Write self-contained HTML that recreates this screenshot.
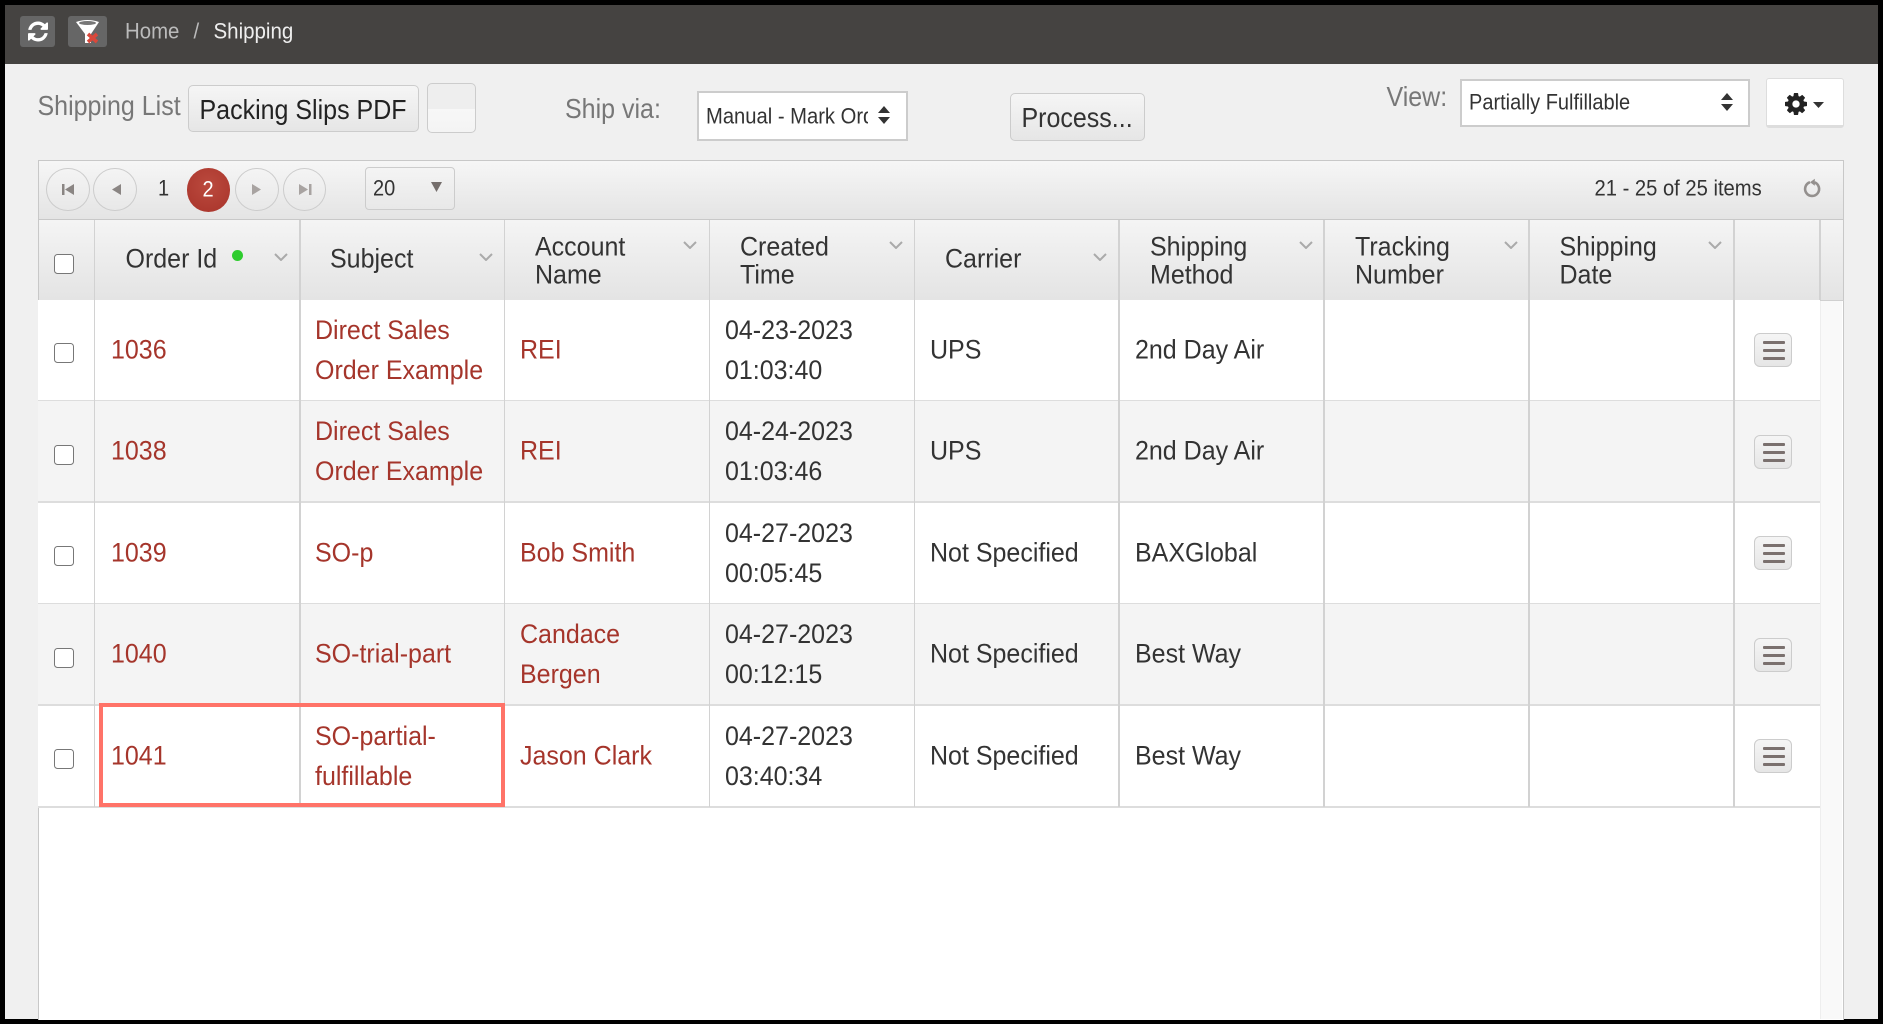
<!DOCTYPE html>
<html><head><meta charset="utf-8"><title>Shipping</title>
<style>
*{box-sizing:border-box}
html,body{margin:0;padding:0;background:#000;width:1883px;height:1024px;overflow:hidden}
body{position:relative;font-family:"Liberation Sans",Arial,sans-serif;color:#333}
.a{position:absolute}
.t{position:absolute;white-space:nowrap;line-height:40px;height:40px;font-size:25px;transform:scaleY(1.1);transform-origin:center}
#wrap{position:absolute;left:0;top:0;width:1883px;height:1024px;filter:blur(.35px)}
#page{position:absolute;left:4.5px;top:5px;width:1873.5px;height:1014px;background:#f0f0f0}
.bar{position:absolute;left:4.5px;top:5px;width:1873.5px;height:59px;background:#454341}
.tb{position:absolute;background:#666;border-radius:3px}
.btn{position:absolute;border:1.5px solid #ccc;border-radius:5px;background:linear-gradient(#f5f5f5,#e6e6e6)}
.sel{position:absolute;background:#fff;border:2px solid #ccc}
.circ{position:absolute;top:168px;width:43.5px;height:43px;border:1.5px solid #ccc;border-radius:50%;background:linear-gradient(#f4f4f4,#e8e8e8)}
.circ svg{position:absolute;left:0;top:0}
.vl{position:absolute;width:1.5px;background:#d2d2d2}
.row{position:absolute;left:38px;width:1782px;border-bottom:2px solid #ddd}
.c{position:absolute;top:0;bottom:0;display:flex;align-items:center;font-size:25px;line-height:37px;white-space:nowrap;transform:scaleY(1.08);color:#333}
.c.m{top:2px}
.r{color:#a5352b}
.cb{position:absolute;left:16px;width:20px;height:20px;background:#fff;border:1.5px solid #777;border-radius:3.5px}
.hm{position:absolute;left:1715.5px;width:38.5px;height:34px;border:1.5px solid #ccc;border-radius:6px;background:linear-gradient(#f5f5f5,#e6e6e6)}
.hm i{position:absolute;left:8px;width:22px;height:3px;background:#7a706e;border-radius:1px}
.h{position:absolute;font-size:25px;line-height:25.6px;white-space:nowrap;transform:scaleY(1.08);color:#333}
.chev{position:absolute;width:14px;height:8px}
</style></head><body>
<div id="wrap">
<div id="page"></div>
<div class="bar"></div>

<div class="tb" style="left:20px;top:16px;width:35px;height:31px"></div>
<svg class="a" style="left:27.5px;top:21px" width="20" height="21" viewBox="0 0 1536 1536"><path fill="#fff" d="M1511 928q0 5-1 7-64 268-268 434.5t-478 166.5q-146 0-282.5-55t-243.5-157l-129 129q-19 19-45 19t-45-19-19-45v-448q0-26 19-45t45-19h448q26 0 45 19t19 45-19 45l-137 137q71 66 161 102t187 36q134 0 250-65t186-179q11-17 53-117 8-23 30-23h192q13 0 22.5 9.5t9.5 22.5zm25-800v448q0 26-19 45t-45 19h-448q-26 0-45-19t-19-45 19-45l138-138q-148-137-349-137-134 0-250 65t-186 179q-11 17-53 117-8 23-30 23h-199q-13 0-22.5-9.5t-9.5-22.5v-7q65-268 270-434.5t480-166.5q146 0 284 55.5t245 156.5l130-129q19-19 45-19t45 19 19 45z"/></svg>
<div class="tb" style="left:68px;top:16px;width:39px;height:31px"></div>
<svg class="a" style="left:68px;top:16px" width="39" height="31" viewBox="0 0 39 31">
<path d="M8 6 Q19.5 2 31 6 L23 18 V27 H17 V18 Z" fill="#fff"/>
<ellipse cx="19.5" cy="7" rx="8.5" ry="2" fill="#777"/>
<path d="M20 18 L29 26 M29 18 L20 26" stroke="#d9483b" stroke-width="3.6"/>
</svg>
<div class="t" style="left:125px;top:12px;font-size:20.4px;color:#bbb">Home</div>
<div class="t" style="left:193.5px;top:12px;font-size:20.4px;color:#bbb">/</div>
<div class="t" style="left:213.5px;top:12px;font-size:20.5px;color:#eee">Shipping</div>

<div class="t" style="left:37.5px;top:86px;color:#777">Shipping List</div>
<div class="btn" style="left:187.5px;top:85px;width:231px;height:47px"></div>
<div class="t" style="left:199.5px;top:90px;color:#222">Packing Slips PDF</div>
<div class="btn" style="left:426.5px;top:83px;width:49px;height:50px;background:linear-gradient(#eee 0,#eee 52%,#f7f7f7 52%,#f4f4f4 100%)"></div>
<div class="t" style="left:565px;top:89px;color:#777">Ship via:</div>
<div class="sel" style="left:697px;top:91px;width:210.5px;height:50px"></div>
<div class="t" style="left:706px;top:97px;font-size:20.2px;width:162px;overflow:hidden;color:#333">Manual - Mark Ord</div>
<svg class="a" style="left:878px;top:106px" width="12" height="19" viewBox="0 0 12 19"><path d="M6 0 L12 7 H0 Z M0 11 H12 L6 18 Z" fill="#333"/></svg>
<div class="btn" style="left:1009.5px;top:93px;width:135px;height:48px"></div>
<div class="t" style="left:1021.5px;top:98px;color:#333">Process...</div>

<div class="t" style="left:1386.5px;top:77px;color:#777">View:</div>
<div class="sel" style="left:1459.5px;top:79px;width:290px;height:48px"></div>
<div class="t" style="left:1469px;top:83px;font-size:20px;color:#333">Partially Fulfillable</div>
<svg class="a" style="left:1721px;top:93px" width="12" height="19" viewBox="0 0 12 19"><path d="M6 0 L12 7 H0 Z M0 11 H12 L6 18 Z" fill="#333"/></svg>
<div class="a" style="left:1766px;top:78px;width:78px;height:50px;background:#fff;border:1.5px solid #ddd;border-bottom:3px solid #ddd;border-radius:3px"></div>
<svg class="a" style="left:1785px;top:93px" width="22" height="22" viewBox="0 0 1536 1536"><path fill="#222" d="M1024 768q0-106-75-181t-181-75-181 75-75 181 75 181 181 75 181-75 75-181zm512-109v222q0 12-8 23t-20 13l-185 28q-19 54-39 91 35 50 107 138 10 12 10 25t-9 23q-27 37-99 108t-94 71q-12 0-26-9l-138-108q-44 23-91 38-16 136-29 186-7 28-36 28h-222q-14 0-24.5-8.5t-11.5-21.5l-28-184q-49-16-90-37l-141 107q-10 9-25 9-14 0-25-11-126-114-165-168-7-10-7-23 0-12 8-23 15-21 51-66.5t54-70.5q-27-50-41-99l-183-27q-13-2-21-12.5t-8-23.5v-222q0-12 8-23t19-13l186-28q14-46 39-92-40-57-107-138-10-12-10-24 0-10 9-23 26-36 98.5-107.5t94.5-71.5q13 0 26 10l138 107q44-23 91-38 16-136 29-186 7-28 36-28h222q14 0 24.5 8.5t11.5 21.5l28 184q49 16 90 37l142-107q9-9 24-9 13 0 25 10 129 119 165 170 7 8 7 22 0 12-8 23-15 21-51 66.5t-54 70.5q26 50 41 98l183 28q13 2 21 12.5t8 23.5z"/></svg>
<svg class="a" style="left:1813px;top:102px" width="11" height="6" viewBox="0 0 11 6"><path d="M0 0 H11 L5.5 6 Z" fill="#333"/></svg>

<!-- grid -->
<div class="a" style="left:38px;top:160px;width:1805.5px;height:860px;background:#fff;border-left:1.5px solid #c8c8c8;border-right:1.5px solid #c8c8c8"></div>
<div class="a" style="left:1820px;top:219px;width:22px;height:800px;background:#f9f9f9;border-left:1px solid #eee"></div>
<div class="a" style="left:38px;top:160px;width:1805.5px;height:60px;background:linear-gradient(#f6f6f6,#e4e4e4);border:1.5px solid #c8c8c8"></div>

<div class="circ" style="left:46px"><svg width="41" height="40" viewBox="0 0 41 40"><path d="M15 15 h2.5 v11 h-2.5 Z M27 15 v11 l-9 -5.5 Z" fill="#8a8583"/></svg></div>
<div class="circ" style="left:93px"><svg width="41" height="40" viewBox="0 0 41 40"><path d="M27 15 v11 l-9 -5.5 Z" fill="#8a8583"/></svg></div>
<div class="t" style="left:158px;top:169px;font-size:20px;color:#333">1</div>
<div class="a" style="left:186.5px;top:168px;width:43.5px;height:43.5px;border-radius:50%;background:radial-gradient(circle at 50% 40%,#bb4a3e,#a8332a)"></div>
<div class="t" style="left:202.5px;top:169.5px;font-size:20px;color:#fff;font-weight:normal">2</div>
<div class="circ" style="left:235px"><svg width="41" height="40" viewBox="0 0 41 40"><path d="M16 15 v11 l9 -5.5 Z" fill="#a8a3a1"/></svg></div>
<div class="circ" style="left:282.5px"><svg width="41" height="40" viewBox="0 0 41 40"><path d="M15 15 v11 l9 -5.5 Z M25 15 h2.5 v11 h-2.5 Z" fill="#a8a3a1"/></svg></div>

<div class="a" style="left:365px;top:167px;width:90px;height:42.5px;border:1.5px solid #ccc;border-radius:4px;background:linear-gradient(#f4f4f4,#e8e8e8)"></div>
<div class="t" style="left:373px;top:168.5px;font-size:20px;color:#333">20</div>
<svg class="a" style="left:431px;top:181.5px" width="11" height="10" viewBox="0 0 11 10"><path d="M0 0 H11 L5.5 10 Z" fill="#756e6c"/></svg>

<div class="t" style="left:1594.5px;top:169px;font-size:20.2px;color:#333">21 - 25 of 25 items</div>
<svg class="a" style="left:1802px;top:177px" width="20" height="22" viewBox="0 0 20 22">
<path d="M8 5.3 A7 7 0 1 0 12.5 5.4" fill="none" stroke="#94908e" stroke-width="2.6"/>
<path d="M8 5.3 L12.8 1.8 L12.8 8.8 Z" fill="#94908e"/></svg>

<!-- header -->
<div class="a" style="left:38px;top:219px;width:1805.5px;height:82px;background:linear-gradient(#f4f4f4,#e4e4e4);border-top:1.5px solid #c8c8c8;border-bottom:1.5px solid #d0d0d0;border-left:1.5px solid #c8c8c8;border-right:1.5px solid #c8c8c8"></div>

<div class="cb" style="left:54px;top:254px;width:20px;height:20px"></div>
<div class="h" style="left:125.5px;top:247px">Order Id</div>
<div class="a" style="left:232px;top:250px;width:11px;height:11px;border-radius:50%;background:#2ecc2e"></div>
<div class="h" style="left:330px;top:247px">Subject</div>
<div class="h" style="left:535px;top:235.5px">Account<br>Name</div>
<div class="h" style="left:740px;top:235.5px">Created<br>Time</div>
<div class="h" style="left:945px;top:247px">Carrier</div>
<div class="h" style="left:1150px;top:235.5px">Shipping<br>Method</div>
<div class="h" style="left:1355px;top:235.5px">Tracking<br>Number</div>
<div class="h" style="left:1559.5px;top:235.5px">Shipping<br>Date</div>

<svg class="chev" style="left:274px;top:253px" viewBox="0 0 14 8"><path d="M1 1 L7 7 L13 1" fill="none" stroke="#aaa" stroke-width="2"/></svg>
<svg class="chev" style="left:479px;top:253px" viewBox="0 0 14 8"><path d="M1 1 L7 7 L13 1" fill="none" stroke="#aaa" stroke-width="2"/></svg>
<svg class="chev" style="left:683px;top:241px" viewBox="0 0 14 8"><path d="M1 1 L7 7 L13 1" fill="none" stroke="#aaa" stroke-width="2"/></svg>
<svg class="chev" style="left:889px;top:241px" viewBox="0 0 14 8"><path d="M1 1 L7 7 L13 1" fill="none" stroke="#aaa" stroke-width="2"/></svg>
<svg class="chev" style="left:1093px;top:253px" viewBox="0 0 14 8"><path d="M1 1 L7 7 L13 1" fill="none" stroke="#aaa" stroke-width="2"/></svg>
<svg class="chev" style="left:1299px;top:241px" viewBox="0 0 14 8"><path d="M1 1 L7 7 L13 1" fill="none" stroke="#aaa" stroke-width="2"/></svg>
<svg class="chev" style="left:1504px;top:241px" viewBox="0 0 14 8"><path d="M1 1 L7 7 L13 1" fill="none" stroke="#aaa" stroke-width="2"/></svg>
<svg class="chev" style="left:1708px;top:241px" viewBox="0 0 14 8"><path d="M1 1 L7 7 L13 1" fill="none" stroke="#aaa" stroke-width="2"/></svg>

<!-- rows -->
<div class="row" style="top:300px;height:102px;background:#fff">
 <div class="cb" style="top:43px"></div>
 <div class="c r" style="left:73px">1036</div>
 <div class="c r m" style="left:277px">Direct Sales<br>Order Example</div>
 <div class="c r" style="left:482px">REI</div>
 <div class="c m" style="left:687px">04-23-2023<br>01:03:40</div>
 <div class="c" style="left:892px">UPS</div>
 <div class="c" style="left:1097px">2nd Day Air</div>
 <div class="hm" style="top:33px"><i style="top:7px"></i><i style="top:15px"></i><i style="top:23px"></i></div>
</div>
<div class="row" style="top:401.4px;height:102px;background:#f4f4f4">
 <div class="cb" style="top:43.5px"></div>
 <div class="c r" style="left:73px">1038</div>
 <div class="c r m" style="left:277px">Direct Sales<br>Order Example</div>
 <div class="c r" style="left:482px">REI</div>
 <div class="c m" style="left:687px">04-24-2023<br>01:03:46</div>
 <div class="c" style="left:892px">UPS</div>
 <div class="c" style="left:1097px">2nd Day Air</div>
 <div class="hm" style="top:33.5px"><i style="top:7px"></i><i style="top:15px"></i><i style="top:23px"></i></div>
</div>
<div class="row" style="top:502.8px;height:102px;background:#fff">
 <div class="cb" style="top:43px"></div>
 <div class="c r" style="left:73px">1039</div>
 <div class="c r" style="left:277px">SO-p</div>
 <div class="c r" style="left:482px">Bob Smith</div>
 <div class="c m" style="left:687px">04-27-2023<br>00:05:45</div>
 <div class="c" style="left:892px">Not Specified</div>
 <div class="c" style="left:1097px">BAXGlobal</div>
 <div class="hm" style="top:33px"><i style="top:7px"></i><i style="top:15px"></i><i style="top:23px"></i></div>
</div>
<div class="row" style="top:604.2px;height:102px;background:#f4f4f4">
 <div class="cb" style="top:43.5px"></div>
 <div class="c r" style="left:73px">1040</div>
 <div class="c r" style="left:277px">SO-trial-part</div>
 <div class="c r m" style="left:482px">Candace<br>Bergen</div>
 <div class="c m" style="left:687px">04-27-2023<br>00:12:15</div>
 <div class="c" style="left:892px">Not Specified</div>
 <div class="c" style="left:1097px">Best Way</div>
 <div class="hm" style="top:33.5px"><i style="top:7px"></i><i style="top:15px"></i><i style="top:23px"></i></div>
</div>
<div class="row" style="top:705.6px;height:102px;background:#fff">
 <div class="cb" style="top:43px"></div>
 <div class="c r" style="left:73px">1041</div>
 <div class="c r m" style="left:277px">SO-partial-<br>fulfillable</div>
 <div class="c r" style="left:482px">Jason Clark</div>
 <div class="c m" style="left:687px">04-27-2023<br>03:40:34</div>
 <div class="c" style="left:892px">Not Specified</div>
 <div class="c" style="left:1097px">Best Way</div>
 <div class="hm" style="top:33px"><i style="top:7px"></i><i style="top:15px"></i><i style="top:23px"></i></div>
</div>

<!-- column lines -->
<div class="vl" style="left:93.5px;top:220px;height:587px"></div>
<div class="vl" style="left:299px;top:220px;height:587px"></div>
<div class="vl" style="left:503.5px;top:220px;height:587px"></div>
<div class="vl" style="left:708.5px;top:220px;height:587px"></div>
<div class="vl" style="left:913.5px;top:220px;height:587px"></div>
<div class="vl" style="left:1118px;top:220px;height:587px"></div>
<div class="vl" style="left:1323px;top:220px;height:587px"></div>
<div class="vl" style="left:1528px;top:220px;height:587px"></div>
<div class="vl" style="left:1733px;top:220px;height:587px"></div>
<div class="vl" style="left:1819px;top:220px;height:80px"></div>

<!-- highlight -->
<div class="a" style="left:99px;top:702.5px;width:405.5px;height:104.5px;border:4px solid #ff7368"></div>
</div>
</body></html>
